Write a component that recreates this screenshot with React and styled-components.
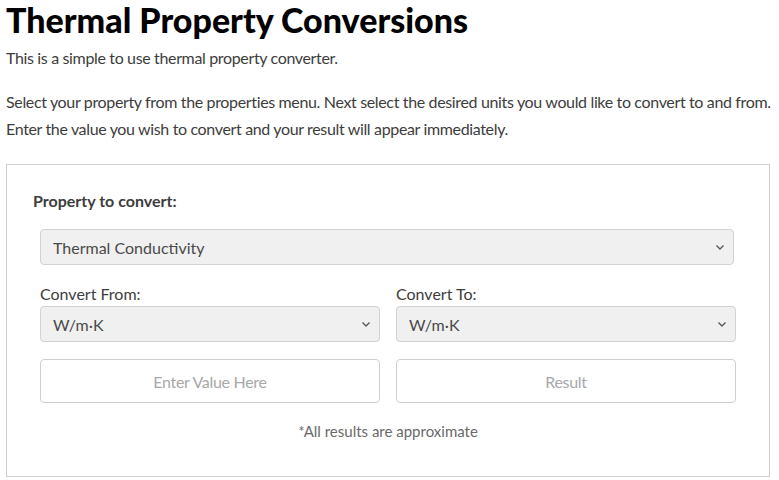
import React, { useState } from 'react';
import styled, { createGlobalStyle } from 'styled-components';

const GlobalStyle = createGlobalStyle`
  body {
    margin: 0;
    background: #ffffff;
    font-family: Lato, "Noto Sans", sans-serif;
    color: #3d3d3d;
  }
  * { box-sizing: border-box; }
`;

const Page = styled.div`
  padding: 0 9px 0 6px;
`;

const Title = styled.h1`
  margin: 0;
  font-size: 34px;
  line-height: 40px;
  font-weight: 900;
  color: #000;
`;

const Text = styled.p`
  margin: ${p => p.$top || 0}px 0 0;
  font-size: 16px;
  line-height: 27px;
  letter-spacing: -0.35px;
  white-space: nowrap;
`;

const Card = styled.div`
  margin-top: 22px;
  border: 1px solid #cfcfcf;
  padding: 24px 33px 36px 26px;
  height: 313px;
`;

const Heading = styled.div`
  font-weight: 700;
  font-size: 16px;
  line-height: 24px;
  color: #3d3d3d;
`;

const Form = styled.div`
  margin: 16px 0 0 7px;
  display: grid;
  grid-template-columns: 1fr 1fr;
  column-gap: 16px;
`;

const Field = styled.div`
  grid-column: ${p => (p.$wide ? '1 / 3' : 'auto')};
  margin-top: ${p => p.$top || 0}px;
  display: flex;
  flex-direction: column;
`;

const Label = styled.label`
  font-size: 16px;
  line-height: 24px;
`;

const SelectWrap = styled.div`
  position: relative;
  margin-right: ${p => p.$trim || 0}px;
`;

const Select = styled.select`
  width: 100%;
  height: 36px;
  appearance: none;
  background: #f0f0f0;
  border: 1px solid #d2d2d2;
  border-radius: 4px;
  padding: 0 30px 0 12px;
  font-family: inherit;
  font-size: 16px;
  color: #4a4a4a;
  outline: none;
`;

const Chevron = styled.svg`
  position: absolute;
  right: 9px;
  top: 50%;
  margin-top: -4px;
  width: 10px;
  height: 8px;
  pointer-events: none;
`;

const Input = styled.input`
  width: 100%;
  height: 44px;
  border: 1px solid #cfcfcf;
  border-radius: 4px;
  background: #fff;
  text-align: center;
  font-family: inherit;
  font-size: 16px;
  letter-spacing: -0.3px;
  color: #333;
  outline: none;
  &::placeholder { color: #a8a8a8; }
`;

const Note = styled.div`
  grid-column: 1 / 3;
  margin-top: 18px;
  text-align: center;
  font-size: 15px;
  line-height: 20px;
  color: #6a6a6a;
`;

const units = ['W/m·K', 'BTU/hr·ft·°F', 'cal/s·cm·°C'];

const Dropdown = ({ value, onChange, options, trim }) => (
  <SelectWrap $trim={trim}>
    <Select value={value} onChange={onChange}>
      {options.map(o => <option key={o}>{o}</option>)}
    </Select>
    <Chevron viewBox="0 0 10 8">
      <path d="M1.5 2.5 L5 6 L8.5 2.5" fill="none" stroke="#555" strokeWidth="1.3" />
    </Chevron>
  </SelectWrap>
);

export default function App() {
  const [prop, setProp] = useState('Thermal Conductivity');
  const [from, setFrom] = useState(units[0]);
  const [to, setTo] = useState(units[0]);
  const [val, setVal] = useState('');

  return (
    <Page>
      <GlobalStyle />
      <Title>Thermal Property Conversions</Title>
      <Text $top={4}>This is a simple to use thermal property converter.</Text>
      <Text $top={17}>
        Select your property from the properties menu. Next select the desired units you would like to convert to and from.
        <br />
        Enter the value you wish to convert and your result will appear immediately.
      </Text>
      <Card>
        <Heading>Property to convert:</Heading>
        <Form>
          <Field $wide>
            <Dropdown
              value={prop}
              onChange={e => setProp(e.target.value)}
              options={['Thermal Conductivity', 'Specific Heat', 'Thermal Diffusivity']}
              trim={2}
            />
          </Field>
          <Field $top={17}>
            <Label>Convert From:</Label>
            <Dropdown value={from} onChange={e => setFrom(e.target.value)} options={units} />
          </Field>
          <Field $top={17}>
            <Label>Convert To:</Label>
            <Dropdown value={to} onChange={e => setTo(e.target.value)} options={units} />
          </Field>
          <Field $top={17}>
            <Input placeholder="Enter Value Here" value={val} onChange={e => setVal(e.target.value)} />
          </Field>
          <Field $top={17}>
            <Input placeholder="Result" readOnly />
          </Field>
          <Note>*All results are approximate</Note>
        </Form>
      </Card>
    </Page>
  );
}
